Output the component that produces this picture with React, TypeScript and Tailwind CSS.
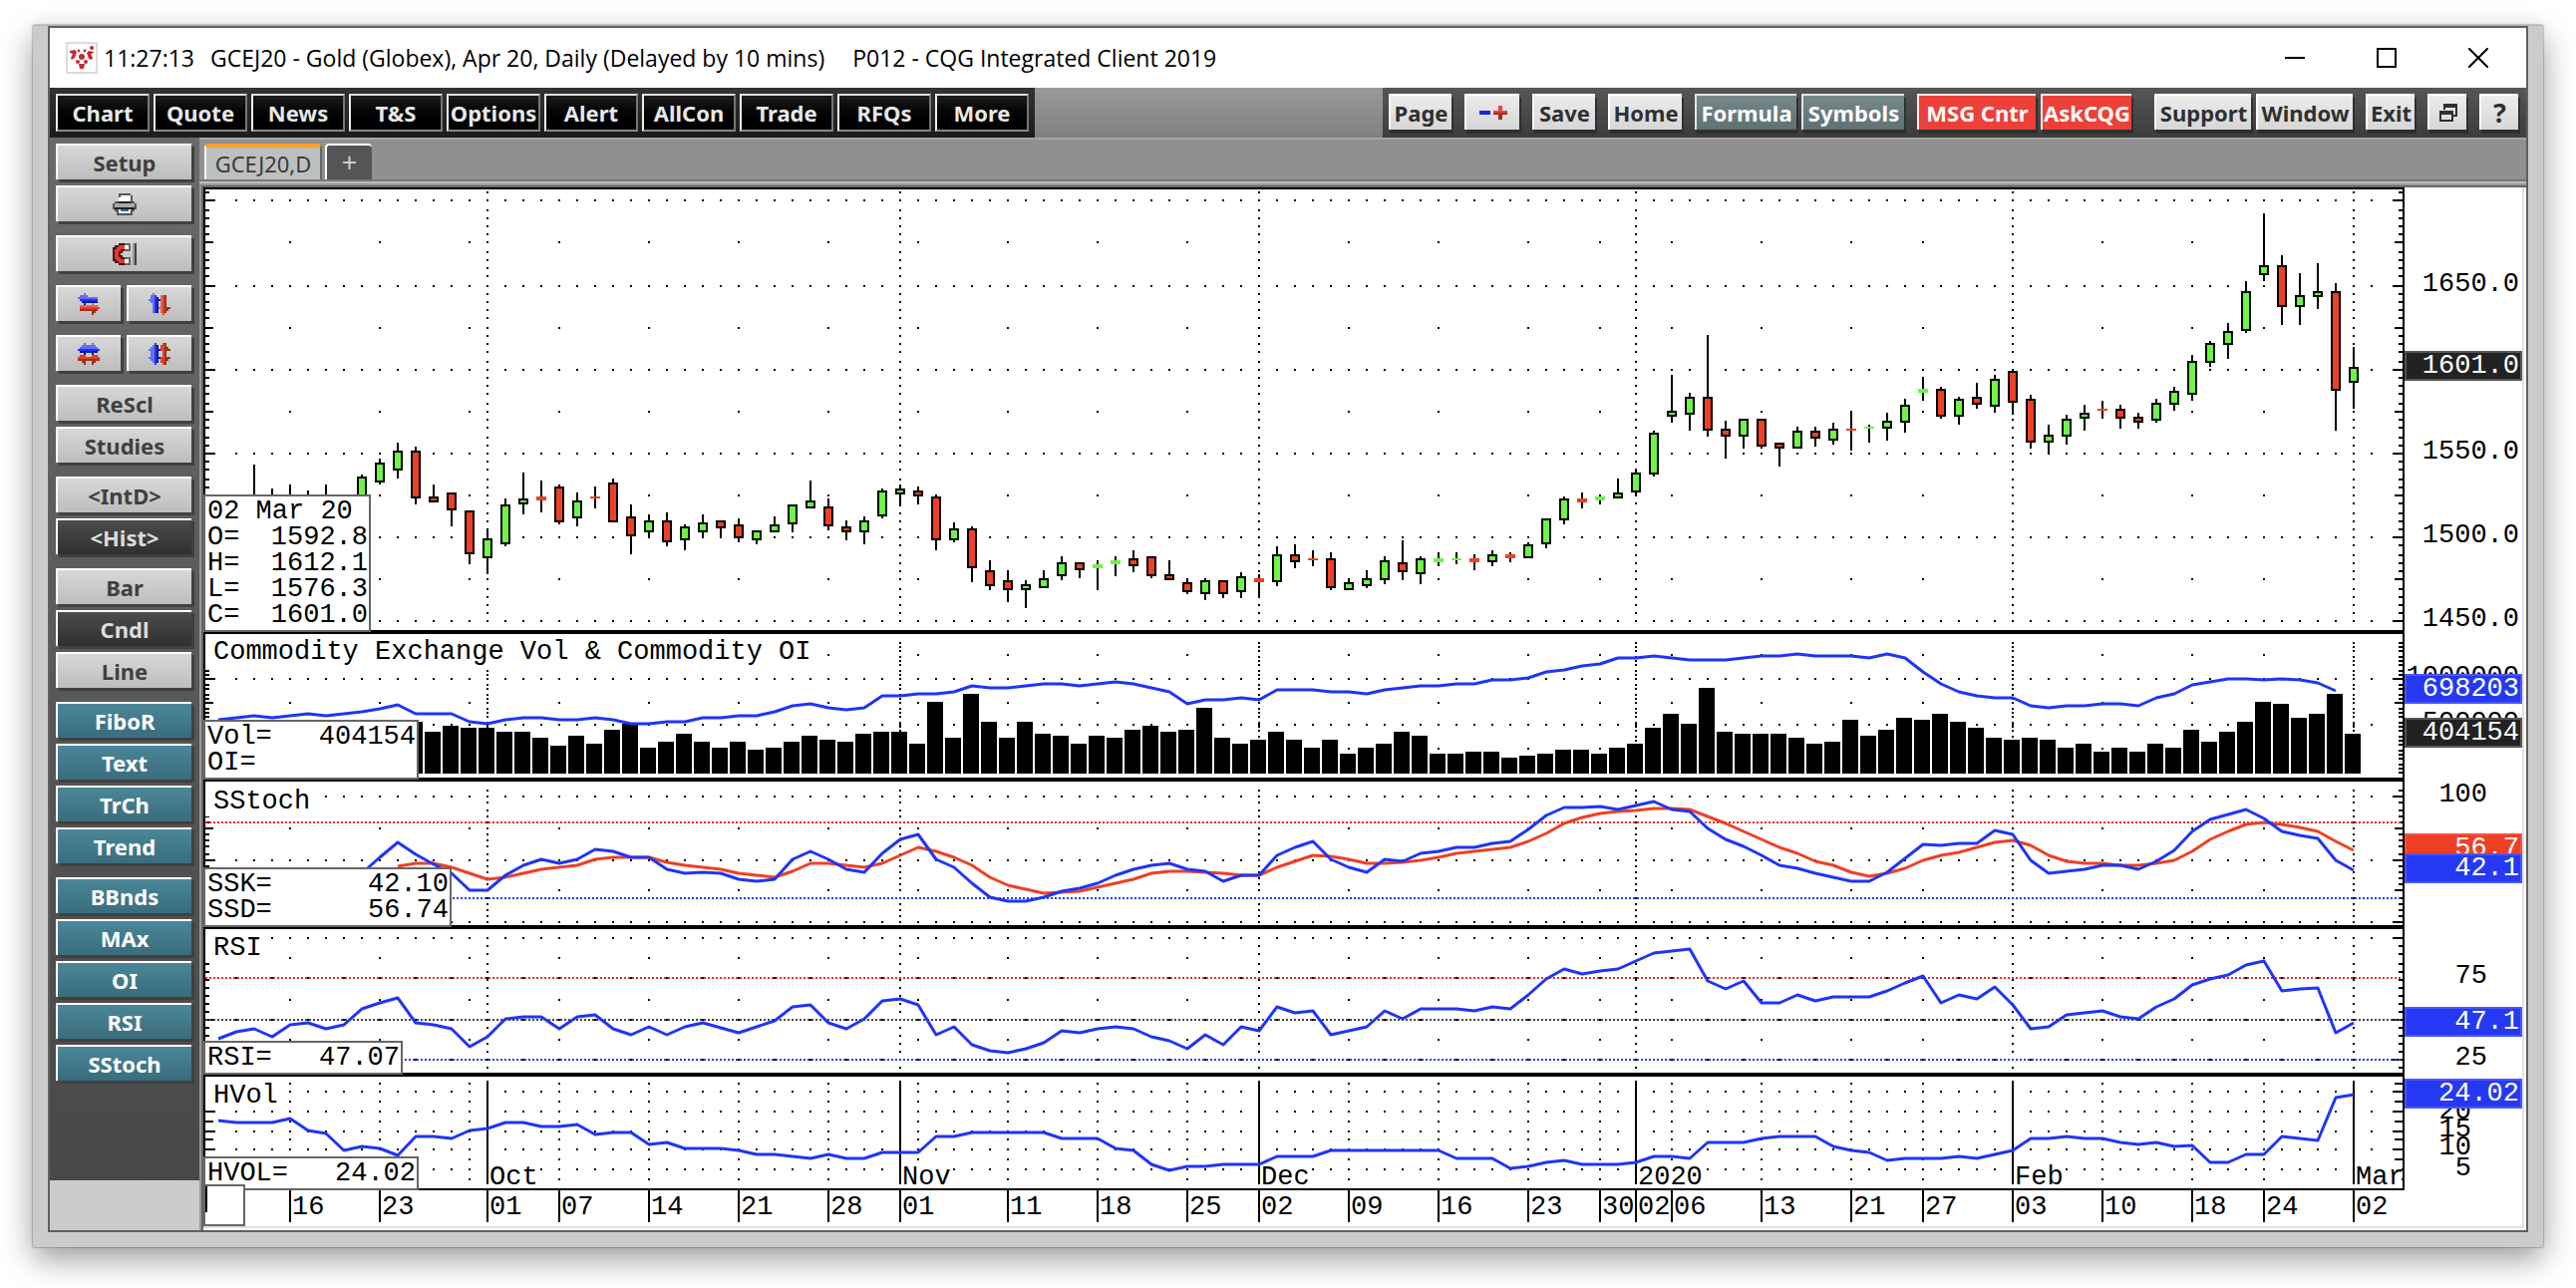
import type { ReactNode } from "react";

const BLUE = "#1f35f5";
const RED = "#ee4025";
const GREEN = "#6ef545";

/* Chart geometry, in viewBox units. Bars are counted back from the newest one (0). */
const LEFT = 206;
const RIGHT = 2410;
const barX = (back: number) => 2361 - back * 18;
const snap = (v: number) => 2 * Math.ceil((v - 1) / 2) + 1;
const range = (n: number) => Array.from({ length: n }, (_, i) => i);

const DAYS = range(120).map((i) => i - 1);
const WEEKS = [115, 110, 105, 100, 95, 90, 85, 80, 75, 70, 65, 56, 51, 46, 42, 38, 33, 28, 24, 14, 9, 5];
const MONTHS = [
  { back: 104, label: "Oct" },
  { back: 81, label: "Nov" },
  { back: 61, label: "Dec" },
  { back: 40, label: "2020" },
  { back: 19, label: "Feb" },
  { back: 0, label: "Mar" },
];
const DATES: [number, string][] = [
  [115, "16"], [110, "23"], [104, "01"], [100, "07"], [95, "14"], [90, "21"], [85, "28"],
  [81, "01"], [75, "11"], [70, "18"], [65, "25"], [61, "02"], [56, "09"], [51, "16"],
  [46, "23"], [42, "30"], [40, "02"], [38, "06"], [33, "13"], [28, "21"], [24, "27"],
  [19, "03"], [14, "10"], [9, "18"], [5, "24"], [0, "02"],
];

/* high, body top, body bottom, low, 1 = up / 0 = down; first entry is bar 117 */
type Candle = [number, number, number, number, number];
const CANDLES: Candle[] = [
  [466, 504, 520, 530, 0], [490, 506, 520, 530, 0], [486, 504, 524, 530, 1], [492, 506, 516, 524, 1],
  [486, 504, 520, 530, 0], [500, 506, 516, 524, 1], [476, 478, 504, 510, 1], [460, 464, 484, 486, 1],
  [444, 452, 472, 480, 1], [448, 452, 500, 506, 0], [486, 498, 504, 504, 0], [494, 494, 512, 528, 0],
  [512, 512, 556, 566, 0], [532, 540, 560, 576, 1], [500, 506, 546, 548, 1], [474, 500, 506, 516, 1],
  [482, 498, 502, 514, 0], [486, 488, 524, 526, 0], [494, 502, 520, 528, 1], [488, 498, 500, 510, 0],
  [480, 484, 524, 524, 0], [506, 518, 538, 556, 0], [516, 522, 534, 540, 1], [514, 522, 544, 548, 0],
  [526, 528, 542, 552, 1], [516, 524, 534, 540, 1], [522, 522, 530, 540, 0], [520, 526, 540, 544, 0],
  [532, 532, 542, 546, 1], [518, 526, 534, 534, 1], [506, 506, 526, 534, 1], [482, 502, 510, 510, 1],
  [500, 508, 528, 532, 0], [522, 528, 534, 542, 0], [518, 522, 534, 546, 1], [490, 492, 518, 520, 1],
  [486, 490, 496, 508, 1], [488, 492, 498, 506, 0], [496, 498, 542, 552, 0], [524, 530, 542, 544, 1],
  [528, 530, 570, 584, 0], [562, 572, 588, 592, 0], [572, 582, 592, 604, 0], [582, 586, 592, 610, 1],
  [572, 580, 590, 590, 1], [558, 564, 578, 582, 1], [564, 564, 572, 580, 0], [562, 566, 570, 592, 1],
  [558, 562, 566, 578, 1], [552, 560, 568, 574, 0], [558, 558, 578, 580, 0], [562, 576, 582, 582, 0],
  [580, 584, 594, 596, 0], [580, 582, 596, 602, 1], [582, 582, 596, 600, 0], [574, 578, 594, 600, 1],
  [576, 580, 584, 598, 0], [548, 556, 584, 588, 1], [546, 556, 564, 570, 0], [552, 560, 562, 568, 0],
  [554, 560, 590, 592, 0], [580, 584, 592, 592, 1], [572, 580, 588, 590, 1], [558, 562, 582, 586, 1],
  [542, 564, 574, 582, 0], [558, 560, 576, 586, 1], [554, 560, 564, 568, 1], [554, 560, 562, 566, 1],
  [556, 560, 564, 572, 0], [552, 556, 564, 568, 1], [554, 556, 560, 564, 0], [544, 546, 560, 560, 1],
  [520, 520, 546, 550, 1], [498, 500, 522, 526, 1], [494, 500, 504, 510, 0], [496, 498, 502, 506, 1],
  [480, 494, 500, 500, 1], [470, 474, 494, 498, 1], [432, 434, 476, 478, 1], [376, 412, 418, 424, 1],
  [394, 398, 416, 432, 1], [336, 398, 432, 438, 0], [422, 430, 438, 460, 0], [420, 420, 438, 450, 1],
  [420, 420, 448, 450, 0], [444, 444, 450, 468, 0], [428, 432, 450, 450, 1], [428, 432, 440, 448, 0],
  [424, 430, 442, 446, 1], [412, 430, 432, 452, 0], [426, 428, 430, 444, 1], [414, 422, 430, 442, 1],
  [400, 406, 424, 434, 1], [378, 390, 394, 402, 1], [388, 390, 418, 420, 0], [398, 400, 418, 426, 1],
  [384, 398, 406, 410, 0], [376, 380, 408, 414, 1], [370, 372, 404, 416, 0], [396, 400, 444, 450, 0],
  [426, 436, 444, 456, 1], [416, 420, 438, 446, 1], [406, 414, 420, 432, 1], [402, 410, 412, 420, 0],
  [406, 410, 420, 430, 0], [414, 418, 424, 430, 0], [400, 404, 422, 424, 1], [388, 392, 406, 412, 1],
  [356, 362, 396, 402, 1], [342, 344, 364, 368, 1], [324, 332, 346, 360, 1], [282, 292, 332, 334, 1],
  [214, 266, 276, 282, 1], [256, 266, 308, 326, 0], [274, 296, 308, 326, 1], [264, 292, 298, 310, 1],
  [284, 292, 392, 432, 0], [348, 368, 384, 410, 1],
];

/* bar tops, first entry is bar 108 */
const VOLUME = [
  724, 734, 728, 730, 730, 734, 734, 740, 748, 738, 746, 732, 726, 750, 744, 736, 744, 750, 744, 752,
  750, 744, 738, 742, 744, 736, 734, 734, 746, 704, 740, 696, 724, 740, 724, 736, 738, 746, 738, 740,
  732, 728, 734, 732, 710, 740, 746, 742, 734, 742, 750, 742, 756, 750, 746, 734, 738, 756, 756, 754,
  754, 760, 758, 756, 752, 752, 756, 750, 746, 730, 716, 726, 690, 734, 736, 736, 736, 740, 746, 744,
  722, 738, 732, 720, 722, 716, 724, 730, 740, 742, 740, 742, 750, 746, 754, 750, 754, 746, 750, 732,
  744, 734, 724, 704, 706, 720, 716, 696, 736,
];

/* line studies: `from` is the bar of the first value */
const OPEN_INTEREST = [
  722, 720, 718, 720, 718, 716, 718, 716, 714, 711, 707, 716, 716, 716, 724, 726, 722, 720, 720, 722,
  722, 720, 722, 726, 726, 724, 724, 720, 720, 718, 718, 714, 708, 706, 710, 712, 710, 698, 698, 696,
  696, 694, 688, 690, 690, 688, 686, 686, 688, 686, 684, 686, 690, 694, 706, 702, 702, 700, 702, 692,
  692, 692, 694, 694, 696, 692, 690, 688, 688, 686, 686, 682, 682, 680, 674, 672, 668, 666, 660, 660,
  658, 660, 662, 662, 662, 660, 658, 658, 656, 658, 658, 658, 660, 656, 660, 674, 686, 694, 698, 700,
  700, 708, 710, 708, 708, 706, 706, 708, 700, 696, 687, 684, 681, 681, 682, 681, 682, 685, 693,
];
const STOCH_K = [
  876, 860, 845, 857, 867, 876, 893, 893, 878, 868, 862, 866, 862, 852, 854, 860, 860, 872, 876, 875,
  876, 882, 884, 882, 862, 854, 862, 872, 875, 856, 842, 837, 862, 870, 886, 900, 904, 904, 900, 894,
  891, 886, 878, 872, 868, 866, 872, 874, 884, 878, 878, 858, 850, 844, 862, 870, 875, 862, 864, 856,
  854, 850, 850, 846, 844, 832, 818, 810, 810, 809, 812, 808, 804, 812, 814, 831, 842, 849, 858, 868,
  871, 876, 880, 884, 884, 875, 861, 847, 848, 846, 846, 833, 837, 863, 876, 874, 872, 868, 868, 872,
  864, 853, 834, 822, 817, 812, 821, 834, 838, 841, 863, 873,
];
const STOCH_D = [
  869, 866, 866, 870, 876, 882, 880, 876, 872, 870, 868, 862, 860, 860, 860, 865, 868, 870, 872, 876,
  878, 880, 874, 866, 866, 868, 870, 866, 858, 850, 854, 860, 868, 880, 888, 892, 896, 895, 894, 890,
  886, 882, 876, 874, 874, 875, 876, 878, 878, 870, 864, 858, 859, 862, 866, 866, 865, 863, 860, 856,
  854, 852, 850, 844, 836, 826, 820, 816, 814, 813, 811, 811, 812, 819, 826, 834, 842, 850, 856, 864,
  868, 875, 879, 876, 871, 863, 858, 855, 850, 845, 843, 848, 858, 864, 866, 866, 868, 868, 866, 863,
  854, 842, 834, 827, 825, 827, 830, 834, 844, 853,
];
const RSI = [
  1042, 1035, 1032, 1040, 1028, 1026, 1032, 1028, 1012, 1006, 1001, 1026, 1028, 1032, 1050, 1040, 1022,
  1020, 1020, 1032, 1020, 1018, 1032, 1038, 1030, 1038, 1030, 1026, 1031, 1036, 1030, 1024, 1010, 1008,
  1026, 1032, 1022, 1004, 1002, 1008, 1038, 1030, 1048, 1054, 1056, 1052, 1046, 1034, 1036, 1032, 1030,
  1032, 1040, 1044, 1052, 1038, 1048, 1030, 1034, 1010, 1016, 1014, 1038, 1034, 1030, 1014, 1022, 1012,
  1012, 1012, 1014, 1010, 1012, 998, 982, 972, 977, 974, 972, 964, 956, 954, 952, 984, 992, 984, 1006,
  1006, 998, 1004, 1000, 1000, 1000, 994, 986, 979, 1006, 998, 1002, 990, 1008, 1032, 1030, 1018, 1016,
  1014, 1020, 1022, 1010, 1002, 988, 982, 978, 968, 964, 994, 992, 991, 1036, 1026,
];
const HVOL = [
  1124, 1126, 1126, 1126, 1122, 1134, 1137, 1154, 1150, 1152, 1159, 1140, 1140, 1142, 1134, 1132, 1126,
  1126, 1130, 1130, 1128, 1138, 1136, 1136, 1148, 1146, 1152, 1152, 1152, 1154, 1158, 1158, 1160, 1162,
  1158, 1162, 1162, 1156, 1156, 1156, 1140, 1140, 1136, 1136, 1136, 1136, 1136, 1142, 1142, 1142, 1152,
  1154, 1168, 1174, 1170, 1170, 1168, 1168, 1168, 1160, 1160, 1160, 1154, 1154, 1154, 1154, 1154, 1154,
  1154, 1162, 1162, 1162, 1172, 1170, 1166, 1164, 1168, 1168, 1168, 1166, 1160, 1160, 1162, 1146, 1146,
  1146, 1142, 1140, 1140, 1140, 1150, 1154, 1156, 1164, 1162, 1162, 1162, 1160, 1162, 1158, 1154, 1142,
  1142, 1140, 1142, 1142, 1146, 1148, 1146, 1150, 1149, 1166, 1166, 1158, 1158, 1140, 1142, 1144, 1101,
  1098,
];

/* full rows carry a dot per day, half rows a dot per week; ticks run up from the lowest one */
const PANES = [
  { full: [201, 287, 371, 455, 539, 623], half: [243, 329, 413, 497, 581], ticks: range(53).map((i) => snap(631.4 - i * 8.4475)) },
  { full: [681, 727], half: [657, 705, 751], ticks: range(29).map((i) => snap(775 - i * 4.7)) },
  { full: [799, 863, 925], half: [831, 893], ticks: range(22).map((i) => snap(924.5 - i * 6.3)) },
  { full: [941, 981, 1023, 1063], half: [961, 1003, 1043], ticks: range(17).map((i) => snap(1071 - i * 8.15)) },
];
const HVOL_ROWS = [1095, 1115, 1135, 1153, 1173];
const HVOL_TICKS = [1087, 1095, 1105, 1115, 1125, 1135, 1143, 1153, 1163, 1173, 1183];

const dot = (x: number, y: number) => `M${x - 1} ${y - 1}h2v2h-2z`;

const gridPath = () => {
  let d = "";
  for (const { full, half, ticks } of PANES) {
    for (const y of full) for (const k of DAYS) d += dot(barX(k), y);
    for (const y of half) for (const k of WEEKS) d += dot(barX(k), y);
    for (const y of ticks) for (const m of MONTHS) d += dot(barX(m.back), y);
    for (const y of ticks) {
      const len = full.includes(y) ? 10 : half.includes(y) ? 8 : 4;
      d += `M${LEFT} ${y - 1}h${len}v2h${-len}zM${RIGHT} ${y - 1}h${-len}v2h${len}z`;
    }
  }
  for (const y of HVOL_ROWS) for (const k of DAYS) d += dot(barX(k), y);
  for (const y of HVOL_TICKS) {
    for (const k of WEEKS) d += dot(barX(k), y);
    const len = HVOL_ROWS.includes(y) ? 10 : 8;
    d += `M${LEFT} ${y - 1}h${len}v2h${-len}zM${RIGHT} ${y - 1}h${-len}v2h${len}z`;
  }
  return d;
};

const Study = ({ from, values, color = BLUE }: { from: number; values: number[]; color?: string }) => (
  <polyline
    points={values.map((y, i) => `${barX(from - i)},${y}`).join(" ")}
    fill="none"
    stroke={color}
    strokeWidth={3}
    strokeLinejoin="round"
  />
);

const Level = ({ y, color }: { y: number; color: string }) => (
  <line x1={LEFT} x2={RIGHT} y1={y} y2={y} stroke={color} strokeWidth={2} strokeDasharray="2 2" />
);

const PaneTitle = ({ y, width, children }: { y: number; width: number; children: ReactNode }) => (
  <g>
    <rect x={206} y={y - 20} width={width} height={28} fill="#fff" />
    <text x={214} y={y}>{children}</text>
  </g>
);

const Readout = ({ y, width, height, rows }: { y: number; width: number; height: number; rows: [string, string][] }) => (
  <g>
    <rect x={205} y={y + 1} width={width} height={height} fill="#fff" stroke="#666" strokeWidth={2} />
    {rows.map(([name, value], i) => (
      <g key={name}>
        <text x={208} y={y + 24 + i * 26}>{name}</text>
        {value && <text x={205 + width - 2} y={y + 24 + i * 26} textAnchor="end">{value}</text>}
      </g>
    ))}
  </g>
);

const Flag = ({ y, fill, edge, children }: { y: number; fill: string; edge: string; children: ReactNode }) => (
  <g>
    <rect x={2413} y={y + 1} width={116} height={28} fill={fill} stroke={edge} strokeWidth={2} />
    <text x={2527} y={y + 22} textAnchor="end" fill="#fff">{children}</text>
  </g>
);

const SCALE: [number, number, string][] = [
  [2527, 292, "1650.0"], [2527, 460, "1550.0"], [2527, 544, "1500.0"], [2527, 628, "1450.0"],
  [2527, 686, "1000000"], [2527, 732, "500000"], [2495, 804, "100"], [2495, 986, "75"],
  [2495, 1068, "25"], [2479, 1122, "20"], [2479, 1140, "15"], [2479, 1158, "10"], [2479, 1179, "5"],
];

const Chart = () => (
  <svg
    viewBox="204 188 2330 1046"
    className="block h-auto w-full bg-white font-['Liberation_Mono',monospace] text-[27px] font-normal"
    role="img"
    aria-label="GCEJ20 daily candlestick chart with studies"
  >
    <path d={gridPath()} shapeRendering="crispEdges" />

    <Level y={825} color="#ee2b2b" />
    <Level y={901} color="#2b3bf0" />
    <Level y={981} color="#ee2b2b" />
    <Level y={1023} color="#444" />
    <Level y={1063} color="#2b3bf0" />

    <g shapeRendering="crispEdges">
      {CANDLES.map(([high, top, bottom, low, up], i) => {
        const x = barX(117 - i);
        const flat = bottom - top <= 4;
        return (
          <g key={i}>
            <rect x={x - 1} y={high} width={2} height={low - high} />
            {!flat && <rect x={x - 5} y={top} width={10} height={bottom - top} />}
            <rect
              x={flat ? x - 5 : x - 3}
              y={flat ? top : top + 2}
              width={flat ? 10 : 6}
              height={flat ? bottom - top : bottom - top - 4}
              fill={up ? GREEN : RED}
            />
          </g>
        );
      })}
      {VOLUME.map((top, i) => (
        <rect key={i} x={barX(108 - i) - 9} y={top} width={16} height={776 - top} />
      ))}
    </g>

    {MONTHS.map(({ back, label }) => (
      <g key={label}>
        <rect x={barX(back) + 2} y={1166} width={label === "Mar" ? 46 : label.length * 16} height={24} fill="#fff" />
        <text x={barX(back) + 2} y={1188}>{label}</text>
        <rect x={barX(back) - 1} y={1084} width={2} height={104} />
      </g>
    ))}

    <Study from={119} values={OPEN_INTEREST} />
    <Study from={109} values={STOCH_D} color={RED} />
    <Study from={111} values={STOCH_K} />
    <Study from={119} values={RSI} />
    <Study from={119} values={HVOL} />

    <PaneTitle y={661} width={608}>Commodity Exchange Vol &amp; Commodity OI</PaneTitle>
    <PaneTitle y={811} width={108}>SStoch</PaneTitle>
    <PaneTitle y={958} width={60}>RSI</PaneTitle>
    <PaneTitle y={1106} width={74}>HVol</PaneTitle>

    {/* Pane frame */}
    <g shapeRendering="crispEdges">
      <rect x={204} y={188} width={2208} height={2} />
      <rect x={204} y={188} width={2} height={1006} />
      <rect x={2410} y={188} width={2} height={1006} />
      <rect x={204} y={632} width={2208} height={4} />
      <rect x={204} y={780} width={2208} height={4} />
      <rect x={204} y={928} width={2208} height={4} />
      <rect x={204} y={1076} width={2208} height={4} />
      <rect x={204} y={1192} width={2208} height={2} />
      <rect x={2530} y={188} width={2} height={1042} fill="#e2e2e2" />
      <rect x={204} y={1230} width={2328} height={2} fill="#e2e2e2" />
    </g>

    {DATES.map(([back, label]) => (
      <g key={back}>
        <rect x={barX(back) - 1} y={1194} width={2} height={32} />
        <text x={barX(back) + 2} y={1218}>{label}</text>
      </g>
    ))}

    {SCALE.map(([x, y, label]) => (
      <text key={y} x={x} y={y} textAnchor="end">{label}</text>
    ))}
    <Flag y={352} fill="#222" edge="#555">1601.0</Flag>
    <Flag y={676} fill="#2539f5" edge="#4a55ff">698203</Flag>
    <Flag y={720} fill="#222" edge="#555">404154</Flag>
    <Flag y={836} fill={RED} edge="#f55040">56.7</Flag>
    <Flag y={856} fill="#2539f5" edge="#4a55ff">42.1</Flag>
    <Flag y={1010} fill="#2539f5" edge="#4a55ff">47.1</Flag>
    <Flag y={1082} fill="#2539f5" edge="#4a55ff">24.02</Flag>

    <Readout
      y={496}
      width={166}
      height={136}
      rows={[["02 Mar 20", ""], ["O=", "1592.8"], ["H=", "1612.1"], ["L=", "1576.3"], ["C=", "1601.0"]]}
    />
    <Readout y={722} width={214} height={58} rows={[["Vol=", "404154"], ["OI=", ""]]} />
    <Readout y={870} width={247} height={58} rows={[["SSK=", "42.10"], ["SSD=", "56.74"]]} />
    <Readout y={1044} width={198} height={32} rows={[["RSI=", "47.07"]]} />
    <Readout y={1160} width={214} height={32} rows={[["HVOL=", "24.02"]]} />
    <rect x={205} y={1189} width={40} height={40} fill="#fff" stroke="#666" strokeWidth={2} />
    <rect x={206} y={1190} width={2} height={26} />
  </svg>
);

const Logo = () => (
  <svg viewBox="0 0 32 32" className="size-8" aria-hidden="true">
    <rect x="1" y="1" width="30" height="30" fill="#fff" stroke="#dcdcdc" strokeWidth="2" />
    <g fill="#c22a36">
      <circle cx="16" cy="15" r="3" />
      <path d="M4 9l5-1 2 2-2 6-3 2-1-2 2-4-3-1zM28 10l-5-1-2 2 2 6 3 1 1-2-2-4 3-1z" />
      <circle cx="12" cy="20" r="2" />
      <circle cx="20" cy="20" r="2" />
      <path d="M13 22h6l-1 5h-4z" />
      <circle cx="13" cy="9" r="1.4" />
      <circle cx="19" cy="9" r="1.4" />
      <circle cx="26" cy="6" r="2" />
    </g>
  </svg>
);

const Icon = ({ children }: { children: ReactNode }) => (
  <svg viewBox="0 0 12 11" className="h-[22px] w-6" shapeRendering="crispEdges" aria-hidden="true">
    {children}
  </svg>
);

const PrinterIcon = () => (
  <Icon>
    <path d="M3 0h6v1h1v3h1v1h1v3h-1v1h-1v2H2V9H1V8H0V5h1V4h2z" fill="#555" />
    <path d="M4 1h5v3H3V2h1z" fill="#fff" />
    <path d="M1 5h10v2H1z" fill="#aaa" />
    <path d="M3 4h6v1H3zM1 7h10v1H1z" fill="#222" />
    <path d="M3 8h6v2H3z" fill="#fff" />
    <path d="M4 8h4v1H4z" fill="#2d62c8" />
  </Icon>
);

const MagnetIcon = () => (
  <Icon>
    <path d="M3 0h6v4H5v1H4v1h1v1h4v4H3v-1H1V9H0V2h1V1h2z" fill="#4c0d0d" />
    <path d="M3 1h3v2H4v1H3v3h1v1h2v2H3V9H2V8H1V3h1V2h1z" fill="#e03a30" />
    <path d="M6 0h3v4H6zM6 7h3v4H6z" fill="#666" />
    <path d="M6 1h2v2H6zM6 8h2v2H6z" fill="#fff" />
    <path d="M11 0h1v11h-1z" fill="#444" />
    <path d="M10 0h1v11h-1z" fill="#999" />
  </Icon>
);

/* one drawing per direction pair: the vertical version is the same one mirrored on its diagonal */
const SwapArrows = ({ vertical = false }: { vertical?: boolean }) => (
  <Icon>
    <g transform={vertical ? "matrix(0 1 1 0 0 0)" : undefined}>
      <path d="M3 0h1v1h1v1h5v1H0V2h1V1h2z" fill="#6a6af8" />
      <path d="M0 3h10v1H1V3z" fill="#1238ff" />
      <path d="M2 4h8v1H4v1H3V5H2z" fill="#0a1e9a" />
      <path d="M7 5h1v1h2v1H1V6h6z" fill="#f0605a" />
      <path d="M1 7h10v1H1z" fill="#ee3a20" />
      <path d="M1 8h9v1H9v1H8v1H7V9H1z" fill="#95351a" />
    </g>
  </Icon>
);

const ZoomArrows = ({ vertical = false }: { vertical?: boolean }) => (
  <Icon>
    <g transform={vertical ? "matrix(0 1 1 0 0 0)" : undefined}>
      <path d="M3 0h1v1h3V0h1v1h1v1h1v1H1V2h1V1h1z" fill="#6a6af8" />
      <path d="M0 3h11v1H0z" fill="#1238ff" />
      <path d="M1 4h9v1H8v1H7V5H4v1H3V5H1z" fill="#0a1e9a" />
      <path d="M1 6h3v1h3V6h3v1h1v1H0V7h1z" fill="#ee3a20" />
      <path d="M0 8h11v1H9v1H8v1H7V9H4v2H3v-1H2V9H0z" fill="#95351a" />
    </g>
  </Icon>
);

const MENU = ["Chart", "Quote", "News", "T&S", "Options", "Alert", "AllCon", "Trade", "RFQs", "More"];

const barButton = "flex h-9 items-center justify-center border-t-2 border-l-2 shadow-[2px_4px_0_#2f2f2f] whitespace-nowrap";
const lightButton = `${barButton} border-white bg-linear-to-b from-[#ececec] to-[#d6d6d6] text-[#303030]`;
const slateButton = `${barButton} border-[#dfe6e6] bg-linear-to-b from-[#75888a] to-[#5f7173] text-white`;
const redButton = `${barButton} border-[#ffe5e2] bg-[#ed4038] text-white`;

const sideButton =
  "flex h-9 w-full items-center justify-center border-t-2 border-l-2 border-white shadow-[3px_3px_0_#404040]";
const greySide = `${sideButton} bg-linear-to-b from-[#d8d8d8] to-[#bdbdbd] text-[#404040]`;
const darkSide = `${sideButton} bg-linear-to-b from-[#4c4c4c] to-[#303030] text-[#dcdcdc]`;
const tealSide = `${sideButton} bg-linear-to-b from-[#4a8798] to-[#3a6c7d] text-white`;

const SideGroup = ({ names, active, teal }: { names: string[]; active?: string; teal?: boolean }) => (
  <div className="flex flex-col gap-1.5">
    {names.map((name) => (
      <button key={name} type="button" className={teal ? tealSide : name === active ? darkSide : greySide}>
        {name}
      </button>
    ))}
  </div>
);

const TitleBar = () => (
  <header className="flex h-[60px] items-center bg-white pr-[38px] pl-4 font-['Open_Sans','Noto_Sans',sans-serif] text-[23px] text-black">
    <Logo />
    <span className="ml-1.5">11:27:13</span>
    <span className="ml-4">GCEJ20 - Gold (Globex), Apr 20, Daily (Delayed by 10 mins)</span>
    <span className="ml-7">P012 - CQG Integrated Client 2019</span>
    <div className="ml-auto flex items-center gap-[72px]">
      <button type="button" aria-label="Minimize">
        <svg viewBox="0 0 20 20" className="size-5"><path d="M0 10h20" stroke="#000" strokeWidth="2" /></svg>
      </button>
      <button type="button" aria-label="Maximize">
        <svg viewBox="0 0 20 20" className="size-5"><path d="M1 1h18v18H1z" fill="none" stroke="#000" strokeWidth="2" /></svg>
      </button>
      <button type="button" aria-label="Close">
        <svg viewBox="0 0 20 20" className="size-5"><path d="M0 0l20 20M20 0L0 20" stroke="#000" strokeWidth="2" /></svg>
      </button>
    </div>
  </header>
);

const Toolbar = () => (
  <nav className="flex h-[50px] justify-between bg-linear-to-b from-[#999] to-[#808080]">
    <div className="flex gap-1 bg-linear-to-b from-[#333] to-[#1c1c1c] pt-1.5 pr-1.5 pl-1.5">
      {MENU.map((name) => (
        <button
          key={name}
          type="button"
          className="flex h-[38px] w-[94px] items-center justify-center border-2 border-t-[#ddd] border-r-[#777] border-b-[#888] border-l-[#eee] bg-linear-to-b from-[#1c1c1c] to-black text-[#e8e8e8]"
        >
          {name}
        </button>
      ))}
    </div>
    <div className="flex gap-[13px] bg-linear-to-b from-[#565656] to-[#3c3c3c] pt-1.5 pr-2 pl-1.5">
      <button type="button" className={`${lightButton} w-[63px]`}>Page</button>
      <button type="button" aria-label="Previous or next page" className={`${lightButton} w-[55px]`}>
        <svg viewBox="0 0 28 16" className="h-4 w-7">
          <path d="M0 6h11v4H0z" fill="#1a24d8" />
          <path d="M19 1h4v5h5v2H14V6h5z" fill="#ee4040" />
          <path d="M14 8h14v2h-5v5h-4v-5h-5z" fill="#9c3018" />
        </svg>
      </button>
      <button type="button" className={`${lightButton} w-[63px]`}>Save</button>
      <button type="button" className={`${lightButton} w-[74px]`}>Home</button>
      <div className="flex gap-[5px]">
        <button type="button" className={`${slateButton} w-[102px]`}>Formula</button>
        <button type="button" className={`${slateButton} w-[103px]`}>Symbols</button>
      </div>
      <div className="flex gap-[5px]">
        <button type="button" className={`${redButton} w-[119px]`}>MSG Cntr</button>
        <button type="button" className={`${redButton} w-[91px]`}>AskCQG</button>
      </div>
      <div className="ml-2.5 flex gap-[5px]">
        <button type="button" className={`${lightButton} w-[97px]`}>Support</button>
        <button type="button" className={`${lightButton} w-[97px]`}>Window</button>
      </div>
      <button type="button" className={`${lightButton} w-[49px]`}>Exit</button>
      <button type="button" aria-label="Restore" className={`${lightButton} w-[39px]`}>
        <svg viewBox="0 0 20 20" className="size-5" fill="none" stroke="#303030">
          <path d="M6 7V2h12v11h-3" strokeWidth="2" />
          <path d="M5 3h14" strokeWidth="4" />
          <path d="M2 9v9h12V9z" strokeWidth="2" />
          <path d="M1 10h14" strokeWidth="4" />
        </svg>
      </button>
      <button type="button" className={`${lightButton} w-[39px] text-[27px]`}>?</button>
    </div>
  </nav>
);

const Sidebar = () => (
  <aside className="flex w-[150px] shrink-0 flex-col bg-[#ccc]">
    <div className="flex grow flex-col gap-3.5 bg-linear-to-b from-[#6a6a6a] to-[#484848] pt-1.5 pr-2 pl-1.5">
      <div className="flex flex-col gap-1.5">
        <button type="button" className={greySide}>Setup</button>
        <button type="button" aria-label="Print" className={greySide}><PrinterIcon /></button>
      </div>
      <button type="button" aria-label="Snap" className={greySide}><MagnetIcon /></button>
      <div className="flex gap-1.5">
        <button type="button" aria-label="Shift horizontally" className={greySide}><SwapArrows /></button>
        <button type="button" aria-label="Shift vertically" className={greySide}><SwapArrows vertical /></button>
      </div>
      <div className="flex gap-1.5">
        <button type="button" aria-label="Scale horizontally" className={greySide}><ZoomArrows /></button>
        <button type="button" aria-label="Scale vertically" className={greySide}><ZoomArrows vertical /></button>
      </div>
      <SideGroup names={["ReScl", "Studies"]} />
      <SideGroup names={["<IntD>", "<Hist>"]} active="<Hist>" />
      <SideGroup names={["Bar", "Cndl", "Line"]} active="Cndl" />
      <SideGroup names={["FiboR", "Text", "TrCh", "Trend"]} teal />
      <SideGroup names={["BBnds", "MAx", "OI", "RSI", "SStoch"]} teal />
    </div>
    <div className="h-[50px]" />
  </aside>
);

export default function App() {
  return (
    <div className="min-h-screen bg-white px-[33px] pt-[25px] pb-10 font-['Noto_Sans',sans-serif] text-[22px] leading-7 font-bold">
      <div className="rounded-xs border-t border-[#b5b5b5] bg-[#cbcbcb] px-[15px] pb-[15px] shadow-[0_0_1px_1px_rgba(0,0,0,0.2),0_12px_32px_rgba(0,0,0,0.4)]">
        <div className="border-2 border-[#606060]">
          <div className="font-normal">
            <TitleBar />
          </div>
          <Toolbar />
          <div className="flex">
            <Sidebar />
            <main className="min-w-0 grow">
              <div className="flex h-[42px] items-end gap-[3px] border-t-2 border-[#a6a6a6] bg-[#909090] pl-[5px] font-normal">
                <button
                  type="button"
                  className="h-9 w-[118px] rounded-t-sm border-t-4 border-r-2 border-l-2 border-t-[#f9a02e] border-r-[#666] border-l-white bg-[#bcc0c0] text-[#3a3a3a]"
                >
                  GCEJ20,D
                </button>
                <button
                  type="button"
                  aria-label="Add tab"
                  className="h-9 w-[47px] rounded-t-sm border-t-2 border-l-2 border-white bg-[#555] text-[27px] text-[#c5d2c5]"
                >
                  +
                </button>
              </div>
              <div className="h-0.5 bg-[#777]" />
              <div className="h-0.5 bg-[#bcbcbc]" />
              <div className="border-t-2 border-l-2 border-[#999]">
                <div className="border-t-2 border-l-2 border-[#666]">
                  <Chart />
                </div>
              </div>
            </main>
          </div>
        </div>
      </div>
    </div>
  );
}
